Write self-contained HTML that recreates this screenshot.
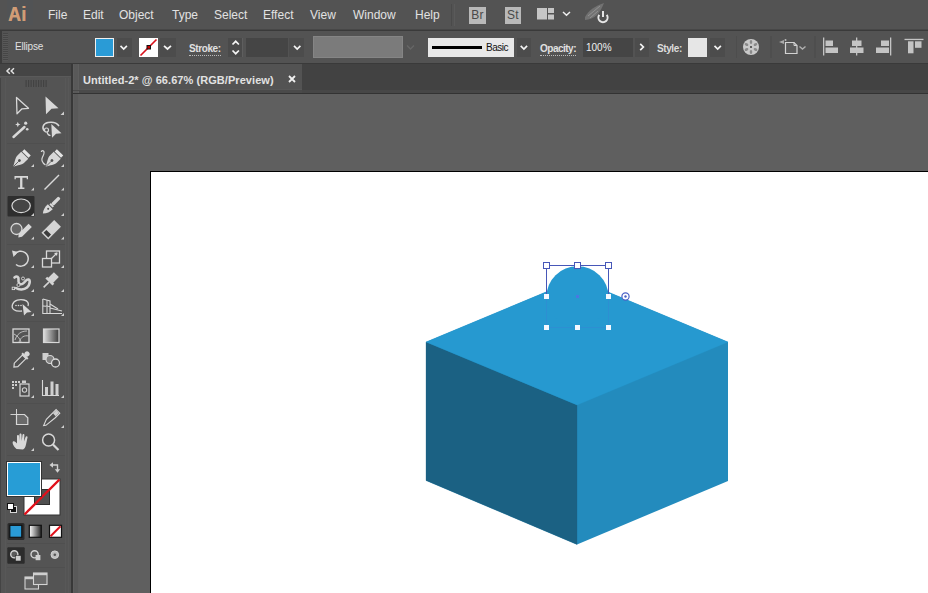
<!DOCTYPE html>
<html><head><meta charset="utf-8">
<style>
*{margin:0;padding:0;box-sizing:border-box}
html,body{width:928px;height:593px;overflow:hidden;background:#535353;font-family:"Liberation Sans",sans-serif}
.a{position:absolute}
#menubar{left:0;top:0;width:928px;height:31px;background:#535353}
#menubar .m{position:absolute;top:8px;font-size:12px;color:#e2e2e2;line-height:14px}
#ctrl{left:0;top:31px;width:928px;height:33px;background:#535353}
#tools{left:0;top:64px;width:71px;height:529px;background:#545454}
#tabbar{left:79px;top:64px;width:849px;height:30px;background:#424242}
#canvas{left:79px;top:94px;width:849px;height:499px;background:#5f5f5f}
#artboard{left:150px;top:171px;width:800px;height:500px;background:#fff;border-left:1px solid #000;border-top:1px solid #000}
.btn{background:#4c4c4c}
.ul{border-bottom:1px dotted #bbb;padding-bottom:1px}
.lbl{position:absolute;font-size:11px;color:#e0e0e0;line-height:12px}
</style></head><body>
<div id="menubar" class="a">
  <div class="a" style="left:7px;top:0px;width:26px;height:25px;background:#515355"></div><div class="a" style="left:8px;top:2px;font-size:21px;font-weight:700;color:#d09c76;line-height:24px;transform:scaleX(0.84);transform-origin:0 0;letter-spacing:0.5px;text-shadow:0.5px 0 0 #d09c76">Ai</div>
  <div class="m" style="left:48px">File</div>
  <div class="m" style="left:83px">Edit</div>
  <div class="m" style="left:119px">Object</div>
  <div class="m" style="left:172px">Type</div>
  <div class="m" style="left:214px">Select</div>
  <div class="m" style="left:263px">Effect</div>
  <div class="m" style="left:310px">View</div>
  <div class="m" style="left:353px">Window</div>
  <div class="m" style="left:415px">Help</div>
  <div class="a" style="left:451px;top:4px;width:1px;height:22px;background:#4a4a4a"></div>
  <div class="a" style="left:454px;top:4px;width:1px;height:22px;background:#5a5a5a"></div>
  <div class="a" style="left:469px;top:7px;width:17px;height:17px;background:#b9b9b9;color:#4a4a4a;font-size:12px;line-height:17px;text-align:center;letter-spacing:0.3px">Br</div>
  <div class="a" style="left:505px;top:7px;width:16px;height:17px;background:#b9b9b9;color:#4a4a4a;font-size:12px;line-height:17px;text-align:center;letter-spacing:0.3px">St</div>
  <svg class="a" style="left:0;top:0" width="928" height="31">
    <g fill="#c6c6c6">
      <rect x="537" y="8" width="10" height="11.5"/>
      <rect x="548" y="8" width="6" height="5"/>
      <rect x="548" y="14.5" width="6" height="5"/>
    </g>
    <path d="M563,12 L566.5,15.3 L570,12" fill="none" stroke="#eee" stroke-width="1.5"/>
    <path d="M585,17 C589,10 595,6 604,3 C602,8 600,12 597,15 C594,18 589,19.5 585,20 Z" fill="#727272"/><path d="M588,16 L600,6 M590,18 L598,11" stroke="#999" stroke-width="0.8"/>
    <path d="M599.3,14.8 A4.6,4.6 0 1 0 606.7,14.8" fill="none" stroke="#e6e6e6" stroke-width="2"/>
    <line x1="603" y1="11" x2="603" y2="17" stroke="#e6e6e6" stroke-width="2"/>
  </svg>
</div>
<div class="a" style="left:0;top:29px;width:928px;height:1px;background:#474747"></div><div class="a" style="left:0;top:30px;width:928px;height:1px;background:#3a3a3a"></div>
<div id="ctrl" class="a">
  <div class="a" style="left:0;top:0;width:2px;height:32px;background:#3c3c3c"></div>
  <div class="a" style="left:3px;top:2px;width:5px;height:28px;background:repeating-linear-gradient(#464646 0 1px,#585858 1px 2px)"></div>
  <div class="lbl" style="left:15px;top:10px;font-size:10px;letter-spacing:-0.2px">Ellipse</div>
  <div class="a" style="left:95px;top:7px;width:19px;height:19px;background:#2a9bd6;border:1px solid #f0f0f0"></div>
  <div class="a btn" style="left:117px;top:7px;width:15px;height:19px"></div>
  <div class="a" style="left:139px;top:7px;width:19px;height:19px;background:#fff"></div>
  <div class="a btn" style="left:160px;top:7px;width:16px;height:19px"></div>
  <div class="lbl ul" style="left:189px;top:12px;font-size:10px;font-weight:bold;letter-spacing:-0.4px;width:32px;line-height:11px">Stroke:</div>
  <div class="a" style="left:228px;top:7px;width:15px;height:19px;background:#4a4a4a;border-right:1px solid #5e5e5e"></div>
  <div class="a" style="left:246px;top:7px;width:42px;height:19px;background:#454545"></div>
  <div class="a btn" style="left:289px;top:7px;width:15px;height:19px"></div>
  <div class="a" style="left:313px;top:5px;width:90px;height:22px;background:#7b7b7b;border:1px solid #858585"></div>
  <div class="a" style="left:428px;top:7px;width:86px;height:19px;background:#e8e8e8"></div>
  <div class="a" style="left:432px;top:15px;width:50px;height:3px;background:#000"></div>
  <div class="a" style="left:486px;top:11px;font-size:10px;color:#111;line-height:12px;letter-spacing:-0.5px">Basic</div>
  <div class="a btn" style="left:517px;top:7px;width:14px;height:19px"></div>
  <div class="lbl ul" style="left:540px;top:12px;font-size:10px;font-weight:bold;letter-spacing:-0.5px;width:36px;line-height:11px">Opacity:</div>
  <div class="a" style="left:583px;top:7px;width:50px;height:19px;background:#454545"></div>
  <div class="lbl" style="left:586px;top:11px;font-size:10px;color:#f0f0f0">100%</div>
  <div class="a btn" style="left:635px;top:7px;width:14px;height:19px"></div>
  <div class="lbl" style="left:657px;top:12px;font-size:10px;font-weight:bold;letter-spacing:-0.4px;line-height:11px;color:#dcdcdc">Style:</div>
  <div class="a" style="left:688px;top:7px;width:19px;height:19px;background:#e6e6e6"></div>
  <div class="a btn" style="left:710px;top:7px;width:15px;height:19px"></div>
  <svg class="a" style="left:0;top:0" width="928" height="32" viewBox="0 31 928 32">
    <g fill="none" stroke="#f4f4f4" stroke-width="1.7" stroke-linecap="butt">
      <path d="M120.5,45.8 L123.7,49 L126.9,45.8"/>
      <path d="M164,45.8 L167.5,49 L171,45.8"/>
      <path d="M232.5,44.5 L235.7,41.3 L238.9,44.5 M232.5,50.5 L235.7,53.7 L238.9,50.5"/>
      <path d="M294,45.8 L297.2,49 L300.4,45.8"/>
      <path d="M520.7,45.8 L523.9,49 L527.1,45.8"/>
      <path d="M640.2,43.8 L643.4,47 L640.2,50.2"/>
      <path d="M714.5,45.8 L717.7,49 L720.9,45.8"/>
    </g>
    <path d="M407,45.5 L410.5,49 L414,45.5" fill="none" stroke="#666" stroke-width="1.4"/>
    <line x1="736.5" y1="36" x2="736.5" y2="58" stroke="#4d4d4d"/>
    <line x1="771" y1="36" x2="771" y2="58" stroke="#4a4a4a"/>
    <line x1="815" y1="36" x2="815" y2="58" stroke="#4a4a4a"/>
    <circle cx="751" cy="47" r="8" fill="#c9c9c9"/>
    <g fill="#8a8a8a">
      <circle cx="751" cy="47" r="1.1" fill="#444"/>
      <ellipse cx="751" cy="42" rx="1.3" ry="2"/>
      <ellipse cx="751" cy="52" rx="1.3" ry="2"/>
      <ellipse cx="746.5" cy="44.5" rx="2" ry="1.3" transform="rotate(30 746.5 44.5)"/>
      <ellipse cx="755.5" cy="49.5" rx="2" ry="1.3" transform="rotate(30 755.5 49.5)"/>
      <ellipse cx="746.5" cy="49.5" rx="2" ry="1.3" transform="rotate(-30 746.5 49.5)"/>
      <ellipse cx="755.5" cy="44.5" rx="2" ry="1.3" transform="rotate(-30 755.5 44.5)"/>
    </g>
    <path d="M785.5,42.5 L794,42.5 L797,45.5 L797,53.5 L785.5,53.5 Z" fill="#5c5c5c" stroke="#d2d2d2" stroke-width="1.2"/>
    <path d="M794,42.5 L794,45.5 L797,45.5" fill="none" stroke="#d2d2d2" stroke-width="1"/>
    <path d="M779,42 L784,40 L784,44 Z" fill="#aaa"/>
    <circle cx="785.5" cy="40" r="1" fill="#bbb"/>
    <path d="M799.5,46.5 L802.5,49 L805.5,46.5" fill="none" stroke="#b0b0b0" stroke-width="1.4"/>
    <g fill="#c4c4c4">
      <rect x="823" y="37.5" width="1.3" height="18"/>
      <rect x="825.5" y="40.5" width="7.5" height="5.5"/>
      <rect x="825.5" y="47.5" width="12.5" height="5.5"/>
      <rect x="856" y="37.5" width="1.3" height="18"/>
      <rect x="852" y="40.5" width="9.5" height="5.5"/>
      <rect x="850" y="47.5" width="13.5" height="5.5"/>
      <rect x="890" y="37.5" width="1.3" height="18"/>
      <rect x="881" y="40.5" width="8" height="5.5"/>
      <rect x="876" y="47.5" width="13" height="5.5"/>
      <rect x="904.5" y="38.8" width="19" height="1.3"/>
      <rect x="908" y="41.3" width="5.5" height="12"/>
      <rect x="915" y="41.3" width="6.5" height="6.5"/>
    </g>
    <line x1="140.5" y1="55.5" x2="156.5" y2="39.5" stroke="#d8121c" stroke-width="1.7"/>
    <rect x="147" y="45.5" width="3.5" height="3.5" fill="#c00" stroke="#111" stroke-width="1"/>
  </svg>
</div>
<div class="a" style="left:0;top:63px;width:928px;height:1px;background:#3a3a3a"></div>
<div id="tools" class="a">
  <div class="a" style="left:0;top:0;width:72px;height:13px;background:#454545;border-bottom:1px solid #5a5a5a"></div>
  <div class="a" style="left:0;top:14px;width:1px;height:515px;background:#444"></div>
  <div class="a" style="left:5px;top:14px;width:1px;height:515px;background:#585858"></div>
  <div class="a" style="left:65px;top:14px;width:1px;height:515px;background:#585858"></div>
  <div class="a" style="left:68px;top:14px;width:1px;height:515px;background:#585858"></div>
</div>
<svg class="a" style="left:0;top:0" width="72" height="593" viewBox="0 0 72 593">
  <path d="M9.8,68.3 L7,71 L9.8,73.7 M14,68.3 L11.2,71 L14,73.7" fill="none" stroke="#e0e0e0" stroke-width="1.5"/>
  <g fill="#424242">
    <rect x="25.5" y="80" width="1.2" height="7"/><rect x="28" y="80" width="1.2" height="7"/><rect x="30.5" y="80" width="1.2" height="7"/>
    <rect x="33" y="80" width="1.2" height="7"/><rect x="35.5" y="80" width="1.2" height="7"/><rect x="38" y="80" width="1.2" height="7"/>
    <rect x="40.5" y="80" width="1.2" height="7"/><rect x="43" y="80" width="1.2" height="7"/><rect x="45.5" y="80" width="1.2" height="7"/>
  </g>
  <g fill="#cfcfcf">
    <path d="M60.5,115 L64,115 L64,111.5 Z"/>
    <path d="M31,167 L34,167 L34,164 Z"/><path d="M61,167 L64,167 L64,164 Z"/>
    <path d="M31,190.5 L34,190.5 L34,187.5 Z"/><path d="M61,190.5 L64,190.5 L64,187.5 Z"/>
    <path d="M31,216 L34,216 L34,213 Z"/><path d="M61,216 L64,216 L64,213 Z"/>
    <path d="M31,239.5 L34,239.5 L34,236.5 Z"/><path d="M61,239.5 L64,239.5 L64,236.5 Z"/>
    <path d="M31,268 L34,268 L34,265 Z"/><path d="M61,268 L64,268 L64,265 Z"/>
    <path d="M31,292 L34,292 L34,289 Z"/><path d="M61,292 L64,292 L64,289 Z"/>
    <path d="M31,316 L34,316 L34,313 Z"/><path d="M61,316 L64,316 L64,313 Z"/>
    <path d="M31,370 L34,370 L34,367 Z"/>
    <path d="M31,398 L34,398 L34,395 Z"/><path d="M61,398 L64,398 L64,395 Z"/>
    <path d="M61,428 L64,428 L64,425 Z"/>
    <path d="M31,451 L34,451 L34,448 Z"/>
  </g>
  <g fill="#4f4f4f">
    <rect x="7" y="143" width="58" height="1"/>
    <rect x="7" y="244" width="58" height="1"/>
    <rect x="7" y="321" width="58" height="1"/>
    <rect x="7" y="403" width="58" height="1"/>
    <rect x="7" y="455" width="58" height="1"/>
    <rect x="7" y="543" width="58" height="1"/>
    <rect x="7" y="567" width="58" height="1"/>
  </g>
  <!-- selection -->
  <path d="M16.5,97.5 L28.5,108.3 L22,108.8 L17,113.8 Z" fill="#505050" stroke="#d8d8d8" stroke-width="1.3" stroke-linejoin="round"/>
  <path d="M45.5,96.5 L58.5,108.3 L51.5,108.8 L46,114.3 Z" fill="#d8d8d8"/>
  <!-- magic wand -->
  <line x1="13.5" y1="137" x2="24.5" y2="127" stroke="#d8d8d8" stroke-width="2.4" stroke-linecap="round"/>
  <path d="M17.8,121.8 L18.6,123.7 L20.5,124.5 L18.6,125.3 L17.8,127.2 L17,125.3 L15.1,124.5 L17,123.7 Z" fill="#d8d8d8"/>
  <circle cx="25.7" cy="123.2" r="1.6" fill="#d8d8d8"/>
  <circle cx="27.2" cy="129.3" r="1.3" fill="#d8d8d8"/>
  <!-- lasso -->
  <path d="M44.5,131 C41.5,128 43,123.5 48,122.5 C52.5,121.8 57,123 59,126" fill="none" stroke="#d8d8d8" stroke-width="1.5"/>
  <circle cx="46.5" cy="130" r="2" fill="none" stroke="#d8d8d8" stroke-width="1.2"/>
  <path d="M47,132 C47.5,134 49,135.5 50.5,135.5" fill="none" stroke="#d8d8d8" stroke-width="1.2"/>
  <path d="M51.3,124 L61.5,133.3 L56,133.8 L52,137.8 Z" fill="#d8d8d8"/>
  <!-- pen -->
  <g transform="translate(20.5,159.5) rotate(45)">
    <path d="M-5,-6 L5,-6 L5,-1 C5,3 2,6 0,10.5 C-2,6 -5,3 -5,-1 Z" fill="#d8d8d8"/>
    <rect x="-4.5" y="-10" width="9" height="3.2" fill="#e4e4e4"/>
    <circle cx="0" cy="1.5" r="1.4" fill="#505050"/>
    <line x1="0" y1="2.5" x2="0" y2="10.5" stroke="#505050" stroke-width="0.8"/>
  </g>
  <!-- curvature pen -->
  <g transform="translate(53,159.5) rotate(45)">
    <path d="M-5,-6 L5,-6 L5,-1 C5,3 2,6 0,10.5 C-2,6 -5,3 -5,-1 Z" fill="#d8d8d8"/>
    <rect x="-4.5" y="-10" width="9" height="3.2" fill="#e4e4e4"/>
    <circle cx="0" cy="1.5" r="1.4" fill="#505050"/>
    <line x1="0" y1="2.5" x2="0" y2="10.5" stroke="#505050" stroke-width="0.8"/>
  </g>
  <path d="M45.5,165 C42.5,163 41,160 42.5,157 C44,154 45,152.5 43.5,151 C42.5,150.3 41.5,151 41.3,152" fill="none" stroke="#d8d8d8" stroke-width="1.2"/>
  <!-- type -->
  <path d="M14.5,176 h13.5 v3.3 h-1.3 v-1.5 h-4.3 v9.7 h2 v1.5 h-6.3 v-1.5 h2 v-9.7 h-4.3 v1.5 h-1.3 Z" fill="#d8d8d8"/>
  <!-- line -->
  <line x1="44.5" y1="189.5" x2="59" y2="175" stroke="#d8d8d8" stroke-width="1.5"/>
  <!-- ellipse selected -->
  <rect x="7.5" y="196" width="27" height="20.5" fill="#2e2e2e" rx="1"/>
  <ellipse cx="21.1" cy="205.8" rx="9.2" ry="6.8" fill="#454545" stroke="#d8d8d8" stroke-width="1.2"/>
  <path d="M31,216 L34,216 L34,213 Z" fill="#cfcfcf"/>
  <!-- paintbrush -->
  <g transform="translate(51,206) rotate(45)">
    <rect x="-1.7" y="-12" width="3.4" height="10" rx="1.2" fill="#d8d8d8"/>
    <rect x="-2.2" y="-2" width="4.4" height="2" fill="#d8d8d8"/>
    <path d="M-3.5,1 L3.5,1 C3.5,5 2.5,8 -0.5,11 C-3,8 -3.5,5 -3.5,1 Z" fill="#d8d8d8"/>
    <circle cx="0" cy="4" r="1" fill="#505050"/>
  </g>
  <!-- shaper -->
  <circle cx="16.5" cy="229" r="5.5" fill="#666" stroke="#d8d8d8" stroke-width="1.3"/>
  <path d="M18.3,237.6 L18.8,233.6 L28.6,223.8 L31.8,227 L22,236.8 Z" fill="#d8d8d8"/>
  <!-- eraser -->
  <g transform="translate(51.2,229.8) rotate(45)">
    <rect x="-4.8" y="-9" width="9.6" height="18" fill="#d4d4d4"/>
    <rect x="-3.3" y="3.5" width="6.6" height="4" fill="#3c3c3c"/>
  </g>
  <!-- rotate -->
  <path d="M14.5,254.5 A7.5,7.5 0 1 1 16,264.5" fill="none" stroke="#d8d8d8" stroke-width="1.5"/>
  <path d="M12,250.5 L18,252 L13.5,257 Z" fill="#d8d8d8"/>
  <!-- scale -->
  <rect x="46.5" y="251" width="13" height="12" fill="none" stroke="#d8d8d8" stroke-width="1.3"/>
  <rect x="42.5" y="258.5" width="9" height="8.5" fill="#505050" stroke="#d8d8d8" stroke-width="1.3"/>
  <path d="M51,259 L57,253" stroke="#d8d8d8" stroke-width="1.2"/><path d="M54,253 L57.5,252.5 L57,256 Z" fill="#d8d8d8"/>
  <!-- warp/width -->
  <path d="M14.5,277.5 C17,275.5 19,277 18.5,280 C18,283 20,285.5 23,283.5 C25.5,282 26,279 28.5,279.5 C30.5,280 30,285 27,287.5 C24,290 19,290 16,288" fill="none" stroke="#d4d4d4" stroke-width="2.6" stroke-linecap="round"/>
  <circle cx="18.5" cy="285" r="1.6" fill="#505050" stroke="#d8d8d8" stroke-width="0.9"/>
  <circle cx="23" cy="278.5" r="1.5" fill="#505050" stroke="#d8d8d8" stroke-width="0.9"/>
  <rect x="12.2" y="287.2" width="2.4" height="2.4" fill="none" stroke="#d8d8d8" stroke-width="0.9"/>
  <!-- pin -->
  <g transform="translate(50,281) rotate(45)">
    <rect x="-3.5" y="-9" width="7" height="9" fill="#d4d4d4"/>
    <rect x="-5" y="-1" width="10" height="2.5" fill="#d4d4d4"/>
    <rect x="-0.8" y="1.5" width="1.6" height="7.5" fill="#d4d4d4"/>
  </g>
  <!-- shape builder -->
  <path d="M22,311 C15,312 11,309 12.5,304.5 C14,300 20,299 24,300 C28,301 29,303.5 28,306" fill="#505050" stroke="#d8d8d8" stroke-width="1.3"/>
  <g fill="#d8d8d8"><circle cx="16" cy="305.5" r="0.8"/><circle cx="18.5" cy="305.5" r="0.8"/><circle cx="21" cy="305.5" r="0.8"/></g>
  <path d="M22.5,304 L31.5,312 L27,312.5 L24,315.5 Z" fill="#d8d8d8"/>
  <!-- perspective grid -->
  <g stroke="#d8d8d8" fill="none" stroke-width="1.1">
    <path d="M42.8,299 L42.8,313.5 L62,313.5"/>
    <path d="M42.8,299 L50,301 L50,313.5"/>
    <path d="M47,300 L47,313.5 M42.8,306 L50,306.5"/>
    <path d="M50,308 L62,311"/><path d="M50,304 L58,309"/>
  </g>
  <!-- mesh -->
  <rect x="13" y="329" width="16" height="13.5" fill="#555" stroke="#d8d8d8" stroke-width="1.3"/>
  <path d="M15,340 C17,334 21,331 27,331 M19,342 C21,337 24,335 29,336 M14,334 C18,336 20,339 21,342" fill="none" stroke="#bdbdbd" stroke-width="1"/>
  <!-- gradient -->
  <defs><linearGradient id="gr" x1="0" x2="1" y1="0" y2="0"><stop offset="0" stop-color="#e0e0e0"/><stop offset="1" stop-color="#3a3a3a"/></linearGradient>
  <linearGradient id="gr2" x1="0" x2="1" y1="0" y2="0"><stop offset="0" stop-color="#ffffff"/><stop offset="1" stop-color="#222"/></linearGradient></defs>
  <rect x="43.5" y="329" width="15.5" height="13.5" fill="url(#gr)" stroke="#d8d8d8" stroke-width="1.2"/>
  <!-- eyedropper -->
  <g transform="translate(21,360) rotate(45)">
    <rect x="-2.5" y="-11" width="5" height="5" rx="2" fill="#d8d8d8"/>
    <rect x="-4" y="-6.5" width="8" height="2" fill="#d8d8d8"/>
    <path d="M-2.5,-4.5 L2.5,-4.5 L2.5,7 L0,10 L-2.5,7 Z" fill="#505050" stroke="#d8d8d8" stroke-width="1.2"/>
  </g>
  <!-- blend -->
  <rect x="42.5" y="353" width="6" height="7" fill="#cfcfcf"/>
  <circle cx="50" cy="359.5" r="4" fill="#808080" stroke="#d8d8d8" stroke-width="1.2"/>
  <circle cx="55.5" cy="363" r="4" fill="#505050" stroke="#d8d8d8" stroke-width="1.3"/>
  <!-- symbol sprayer -->
  <g fill="#cfcfcf">
    <rect x="12" y="381" width="2" height="2"/><rect x="15" y="381" width="2" height="2"/><rect x="18" y="381" width="2" height="2"/>
    <rect x="12" y="384" width="2" height="2"/><rect x="15" y="384" width="2" height="2"/>
    <rect x="12" y="387" width="2" height="2"/>
    <rect x="22" y="380.5" width="4" height="2.5"/>
  </g>
  <rect x="20" y="384" width="9" height="12" fill="#505050" stroke="#d8d8d8" stroke-width="1.2"/>
  <circle cx="24.5" cy="390" r="2.2" fill="#505050" stroke="#cfcfcf" stroke-width="1.1"/>
  <!-- graph -->
  <path d="M42.5,380 L42.5,395.5 L59,395.5" fill="none" stroke="#d8d8d8" stroke-width="1.1"/>
  <rect x="45" y="387" width="3" height="8" fill="#cfcfcf"/>
  <rect x="50.5" y="381.5" width="3" height="13.5" fill="#cfcfcf"/>
  <rect x="55.5" y="384" width="3" height="11" fill="#cfcfcf"/>
  <!-- artboard -->
  <path d="M10.5,414.5 L16.5,414.5 M16.5,409 L16.5,414.5" stroke="#cfcfcf" stroke-width="1"/>
  <path d="M16.5,414.5 L24.5,414.5 L27.8,417.8 L27.8,424.5 L16.5,424.5 Z" fill="#6a6a6a" stroke="#d8d8d8" stroke-width="1.2"/>
  <!-- slice -->
  <g transform="translate(50.8,418.5) rotate(45) scale(0.92)">
    <path d="M-2.8,-11 L2.8,-11 L2.8,-4 L1.5,9 L0,11 L-2.8,4 Z" fill="#505050" stroke="#d8d8d8" stroke-width="1.2"/>
    <rect x="-2" y="-10.5" width="4" height="5" fill="#cfcfcf"/>
  </g>
  <!-- hand -->
  <path d="M16.5,449 C13,446 12,442.5 13,441.5 C14,440.5 16,442 17,443.5 L17,436 C17,434.5 19,434.5 19,436 L19,441 L19.5,434.5 C19.5,433 21.5,433 21.5,434.5 L21.7,441 L22.5,435 C22.7,433.5 24.5,433.7 24.4,435.3 L24,441.5 L25.6,437 C26,435.6 27.8,436 27.5,437.5 L26,444.5 C25.5,447 24.5,449 23,449.5 Z" fill="#d8d8d8"/>
  <!-- zoom -->
  <circle cx="48.6" cy="440" r="6" fill="#4a4a4a" stroke="#d8d8d8" stroke-width="1.5"/>
  <line x1="53" y1="444.5" x2="58.5" y2="450" stroke="#d8d8d8" stroke-width="2.2"/>
  <!-- fill / stroke -->
  <rect x="23.5" y="478.5" width="37" height="37" fill="#333"/>
  <path d="M24.5,479.5 H59.5 V514.5 H24.5 Z M34.5,489.5 V504.5 H49.5 V489.5 Z" fill="#ffffff" fill-rule="evenodd"/>
  <rect x="34.5" y="489.5" width="15" height="15" fill="#505050" stroke="#2e2e2e" stroke-width="1"/>
  <line x1="24.5" y1="514.5" x2="59.5" y2="479.5" stroke="#e0101a" stroke-width="2.4"/>
  <rect x="6" y="461" width="36" height="36" fill="#333"/>
  <rect x="7" y="462" width="34" height="34" fill="#ffffff"/>
  <rect x="8" y="463" width="32" height="32" fill="#279dd6"/>
  <!-- swap -->
  <path d="M52,465 H57.5 V470" fill="none" stroke="#d0d0d0" stroke-width="1.4"/>
  <path d="M49.5,465 L53,462.3 L53,467.7 Z M57.5,472.8 L54.8,469.3 L60.2,469.3 Z" fill="#d0d0d0"/>
  <!-- default -->
  <rect x="10.5" y="506.5" width="6" height="6" fill="#111" stroke="#d8d8d8" stroke-width="1"/>
  <rect x="7.5" y="503.5" width="6" height="6" fill="#fff" stroke="#111" stroke-width="1"/>
  <!-- color modes -->
  <rect x="7.5" y="523" width="17" height="17" fill="#2b2b2b" rx="1.5"/>
  <rect x="9.8" y="525.3" width="12" height="12" fill="#2a9bd6" stroke="#111" stroke-width="1.2"/>
  <rect x="29.3" y="525.3" width="12" height="12" fill="url(#gr2)" stroke="#111" stroke-width="1.2"/>
  <rect x="49.5" y="525.3" width="12" height="12" fill="#fff" stroke="#111" stroke-width="1.2"/>
  <line x1="50.5" y1="536.3" x2="60.5" y2="526.3" stroke="#e0101a" stroke-width="2"/>
  <!-- draw modes -->
  <rect x="7.3" y="547.3" width="17.4" height="16.5" fill="#2c2c2c" rx="1"/>
  <circle cx="14.3" cy="554.3" r="3.6" fill="#5a5a5a" stroke="#d4d4d4" stroke-width="1.4"/>
  <rect x="15.5" y="555.5" width="5.5" height="5.5" fill="#cfcfcf" stroke="#2c2c2c" stroke-width="0.6"/>
  <circle cx="34.6" cy="554.3" r="3.6" fill="#5a5a5a" stroke="#d4d4d4" stroke-width="1.4"/>
  <rect x="35.6" y="555" width="4.8" height="5.2" fill="#cfcfcf"/>
  <circle cx="54.8" cy="554.7" r="3.8" fill="#bdbdbd" stroke="#d4d4d4" stroke-width="1"/>
  <circle cx="54.8" cy="554.7" r="1.3" fill="#555"/>
  <!-- screen mode -->
  <rect x="25" y="577" width="13.5" height="12" fill="#626262" stroke="#d4d4d4" stroke-width="1.1"/>
  <rect x="25" y="577" width="13.5" height="2.2" fill="#cfcfcf"/>
  <rect x="33.5" y="573" width="13.5" height="11.5" fill="#6a6a6a" stroke="#d4d4d4" stroke-width="1.1"/>
  <rect x="33.5" y="573" width="13.5" height="2.2" fill="#cfcfcf"/>
</svg>
<div class="a" style="left:71px;top:64px;width:2px;height:529px;background:#383838"></div>
<div class="a" style="left:73px;top:64px;width:6px;height:529px;background:#595959;border-left:1px solid #5e5e5e;border-right:1px solid #5e5e5e"></div><div class="a" style="left:73px;top:93px;width:6px;height:1px;background:#333"></div><div class="a" style="left:73px;top:90px;width:6px;height:1px;background:#4a4a4a"></div>
<div id="tabbar" class="a">
  <div class="a" style="left:0;top:0;width:223px;height:25px;background:#535353">
    <div class="a" style="left:4px;top:10px;font-size:11px;font-weight:bold;color:#e2e2e2;line-height:12px;white-space:nowrap;letter-spacing:0.06px">Untitled-2* @ 66.67% (RGB/Preview)</div>
  </div>
  <svg class="a" style="left:209px;top:11px" width="8" height="8"><path d="M1,1 L7,7 M7,1 L1,7" stroke="#f0f0f0" stroke-width="1.8"/></svg>
  <div class="a" style="left:0;top:25px;width:223px;height:4px;background:#4a4a4a;border-top:1px solid #575757"></div>
  <div class="a" style="left:223px;top:26px;width:626px;height:3px;background:#474747"></div>
  <div class="a" style="left:0;top:29px;width:849px;height:1px;background:#333"></div>
</div>
<div id="canvas" class="a"></div>
<div id="artboard" class="a"></div>
<svg class="a" style="left:0;top:0" width="928" height="593" viewBox="0 0 928 593">
  <polygon points="426,342 577,279 728,342 728,481 577,544.5 426,480.5" fill="#238bbd"/>
  <polygon points="426,342 577,405 577,544.5 426,480.5" fill="#1b6183" stroke="#1b6183" stroke-width="0.3"/>
  <polygon points="426,342 577,279 728,342 577,405" fill="#2699d0" stroke="#2699d0" stroke-width="0.3"/>
  <ellipse cx="577.5" cy="296.5" rx="31" ry="30.2" fill="#2699d0"/>
  <g stroke="#4757b8" stroke-width="1" fill="none">
    <path d="M546.5,265.5 H608.5 M546.5,265.5 V296 M608.5,265.5 V296"/>
    <path d="M546.5,299 V327.5 H608.5 V299" stroke="#3d7fd6" stroke-opacity="0.35"/>
  </g>
  <g fill="#ffffff" stroke="#4757b8" stroke-width="1">
    <rect x="543.5" y="262.5" width="6" height="6"/>
    <rect x="574.5" y="262.5" width="6" height="6"/>
    <rect x="605.5" y="262.5" width="6" height="6"/>
  </g>
  <g fill="#f4f8ff">
    <rect x="544" y="294" width="5" height="5"/>
    <rect x="606" y="294" width="5" height="5"/>
    <rect x="544" y="325" width="5" height="5"/>
    <rect x="575" y="325" width="5" height="5"/>
    <rect x="606" y="325" width="5" height="5"/>
  </g>
  <rect x="576" y="295" width="3" height="3" fill="#4a78e0"/>
  <circle cx="625.5" cy="296.5" r="3.6" fill="#fff" stroke="#4b62c6" stroke-width="1.2"/>
  <circle cx="625.5" cy="296.5" r="1.2" fill="#4b62c6"/>
</svg>
</body></html>
